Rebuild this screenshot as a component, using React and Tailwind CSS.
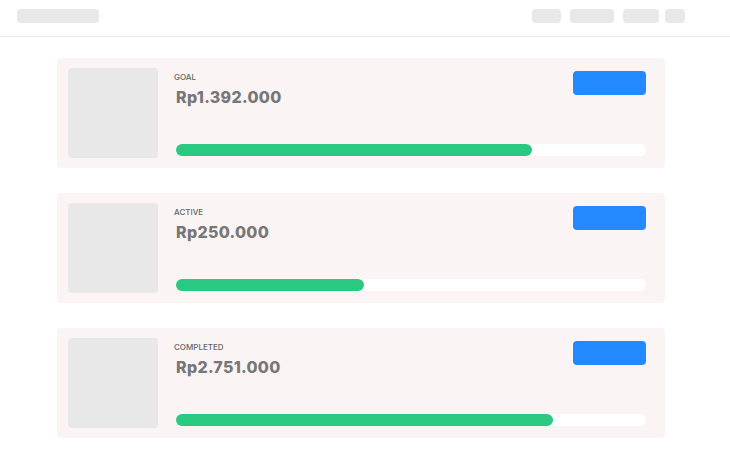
export default function App() {
  const cards = [
    { label: "GOAL", amount: "Rp1.392.000", fill: 356 },
    { label: "ACTIVE", amount: "Rp250.000", fill: 188 },
    { label: "COMPLETED", amount: "Rp2.751.000", fill: 377 },
  ];
  return (
    <div className="w-[730px] h-[466px] bg-white" style={{ fontFamily: "Inter, 'Noto Sans', sans-serif" }}>
      <header className="h-[37px] border-b border-[#ececec] flex items-start pt-[9px] pl-[17px]">
        <div className="w-[82px] h-[14px] rounded-[4px] bg-[#e8e8e8]" />
        <div className="ml-auto flex items-start mr-[45px]">
          <div className="w-[29px] h-[14px] rounded-[4px] bg-[#e8e8e8]" />
          <div className="ml-[9px] w-[44px] h-[14px] rounded-[4px] bg-[#e8e8e8]" />
          <div className="ml-[9px] w-[36px] h-[14px] rounded-[4px] bg-[#e8e8e8]" />
          <div className="ml-[6px] w-[20px] h-[14px] rounded-[4px] bg-[#e8e8e8]" />
        </div>
      </header>
      <main className="pt-[21px] pl-[57px] flex flex-col gap-[25px]">
        {cards.map((c) => (
          <div key={c.label} className="w-[608px] h-[110px] rounded-[4px] bg-[#faf4f4] flex pl-[11px] pt-[10px] pb-[10px] pr-[19px]">
            <div className="w-[90px] h-[90px] rounded-[4px] bg-[#e8e8e8] shrink-0" />
            <div className="flex-1 ml-[18px] flex flex-col justify-between">
              <div className="flex items-start justify-between">
                <div className="pt-[4px]">
                  <div className="-ml-[2px] text-[8px] leading-[10px] font-medium text-[#666] uppercase">{c.label}</div>
                  <div className="mt-[5px] text-[16px] leading-[20px] font-extrabold tracking-[0.3px] text-[#777]">{c.amount}</div>
                </div>
                <div className="mt-[3px] w-[73px] h-[24px] rounded-[4px] bg-[#2389ff]" />
              </div>
              <div className="mb-[2px] h-[12px] rounded-full bg-white">
                <div className="h-[12px] rounded-full bg-[#2ac981]" style={{ width: c.fill }} />
              </div>
            </div>
          </div>
        ))}
      </main>
    </div>
  );
}
